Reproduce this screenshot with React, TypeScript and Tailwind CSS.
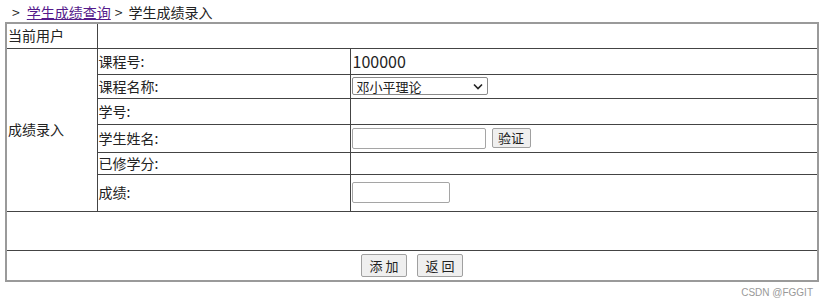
import React from "react";

const cell = "border border-[#444] p-0 align-middle";

export default function App() {
  return (
    <div className="w-[829px] h-[305px] bg-white relative text-[14px] text-[#222]" style={{ fontFamily: '"Noto Sans CJK SC", "Noto Sans", sans-serif' }}>
      <div className="h-[22px] pl-[12px] pt-[2px] leading-[20px] flex">
        <span className="mr-[7px]">&gt;</span>
        <a href="#" className="text-[#551a8b] underline">学生成绩查询</a>
        <span className="ml-[4px] mr-[6px]">&gt;</span>
        <span>学生成绩录入</span>
      </div>
      <table className="ml-[5px] w-[812px] border-collapse border-2 border-[#9a9a9a] table-fixed">
        <colgroup>
          <col className="w-[91px]" />
          <col className="w-[253px]" />
          <col className="w-[468px]" />
        </colgroup>
        <tbody>
          <tr className="h-[25px]">
            <td className={cell + " pl-[1px]"}>当前用户</td>
            <td className={cell} colSpan={2}></td>
          </tr>
          <tr className="h-[26px]">
            <td className={cell + " pl-[1px]"} rowSpan={6}>成绩录入</td>
            <td className={cell + " pl-[1px]"}>课程号:</td>
            <td className={cell + " pl-[2px] text-[16px]"}>100000</td>
          </tr>
          <tr className="h-[24px]">
            <td className={cell + " pl-[1px]"}>课程名称:</td>
            <td className={cell + " pl-[1px]"}>
              <div className="w-[136px] h-[18px] border border-[#8a8a8a] rounded-[2px] flex items-center justify-between px-[4px] text-[13px] leading-none bg-white">
                <span>邓小平理论</span>
                <svg width="10" height="7" viewBox="0 0 10 7"><path d="M1 1.5 L5 5.5 L9 1.5" fill="none" stroke="#222" strokeWidth="1.6" /></svg>
              </div>
            </td>
          </tr>
          <tr className="h-[26px]">
            <td className={cell + " pl-[1px]"}>学号:</td>
            <td className={cell}></td>
          </tr>
          <tr className="h-[28px]">
            <td className={cell + " pl-[1px]"}>学生姓名:</td>
            <td className={cell + " pl-[1px]"}>
              <div className="flex items-center gap-[6px]">
                <div className="w-[134px] h-[21px] border border-[#a5a5a5] rounded-[2px]" />
                <div className="w-[39px] h-[20px] border border-[#a0a0a0] rounded-[2px] bg-[#efefef] flex items-center justify-center text-[13px]">验证</div>
              </div>
            </td>
          </tr>
          <tr className="h-[21px]">
            <td className={cell + " pl-[1px]"}>已修学分:</td>
            <td className={cell}></td>
          </tr>
          <tr className="h-[37px]">
            <td className={cell + " pl-[1px]"}>成绩:</td>
            <td className={cell + " pl-[1px]"}>
              <div className="w-[98px] h-[21px] border border-[#a5a5a5] rounded-[2px]" />
            </td>
          </tr>
          <tr className="h-[39px]">
            <td className={cell} colSpan={3}></td>
          </tr>
          <tr className="h-[31px]">
            <td className={cell} colSpan={3}>
              <div className="flex justify-center gap-[10px]">
                <div className="w-[46px] h-[23px] border border-[#a0a0a0] rounded-[2px] bg-[#efefef] flex items-center justify-center text-[13px]">添 加</div>
                <div className="w-[46px] h-[23px] border border-[#a0a0a0] rounded-[2px] bg-[#efefef] flex items-center justify-center text-[13px]">返 回</div>
              </div>
            </td>
          </tr>
        </tbody>
      </table>
      <div className="absolute right-[16px] top-[285px] text-[10px] text-[#999]" style={{ fontFamily: '"Liberation Sans", sans-serif' }}>CSDN @FGGIT</div>
    </div>
  );
}
